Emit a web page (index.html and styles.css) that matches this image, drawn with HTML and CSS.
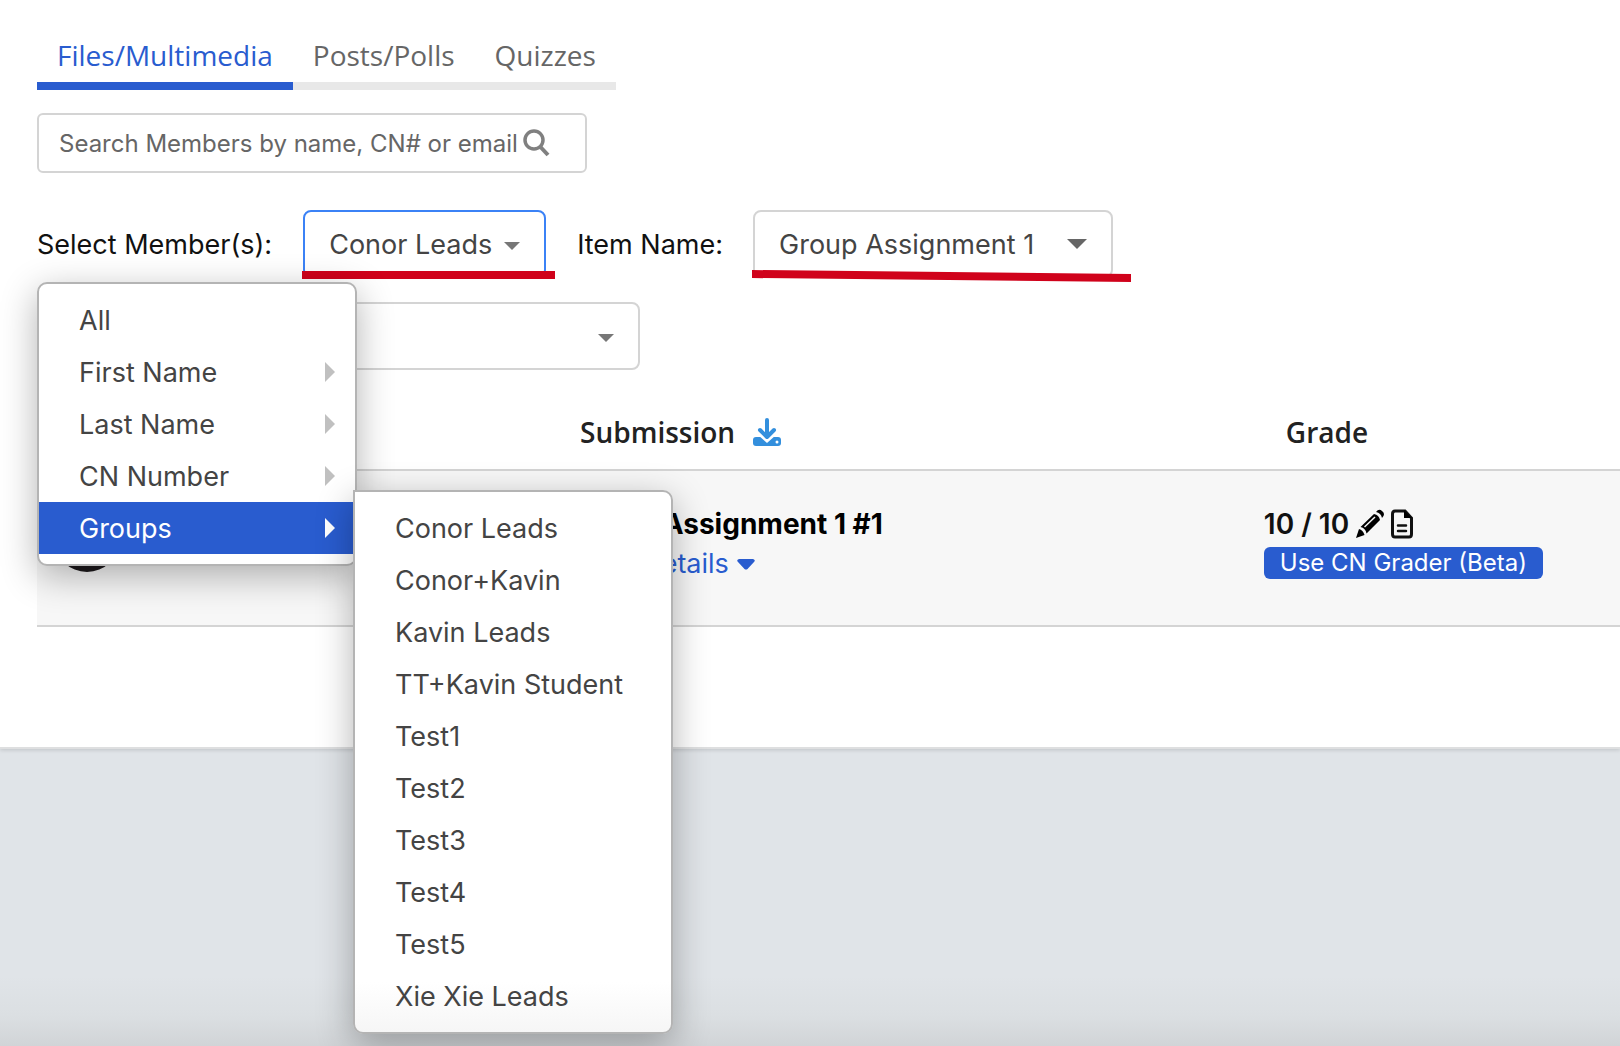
FILE: index.html
```html
<!DOCTYPE html>
<html lang="en">
<head>
    <meta charset="UTF-8">
    <meta name="viewport" content="width=device-width, initial-scale=1.0">
    <title>Submissions</title>
    <link rel="stylesheet" href="styles.css">
</head>
<body>
    <main class="panel">
        <nav class="tabs">
            <a href="#files" class="tab active">Files/Multimedia</a>
            <a href="#posts" class="tab">Posts/Polls</a>
            <a href="#quizzes" class="tab">Quizzes</a>
        </nav>

        <form class="search">
            <input type="text" class="search-input" aria-label="Search Members" placeholder="Search Members by name, CN# or email">
            <button type="button" class="search-button" aria-label="Search">
                <svg width="28" height="30" viewBox="0 0 28 30" fill="none" stroke="#808080">
                    <circle cx="11" cy="12" r="9" stroke-width="3.500"/>
                    <path d="M17.500 19L25 27" stroke-width="4"/>
                </svg>
            </button>
        </form>

        <div class="filters">
            <span class="filter-label" id="member-label">Select Member(s):</span>
            <div class="dropdown member-dropdown">
                <button type="button" class="dropdown-button open" aria-haspopup="true" aria-expanded="true" aria-describedby="member-label">
                    Conor Leads <span class="caret"></span>
                </button>
                <div class="underline"></div>
            </div>
            <label class="filter-label" for="item-name">Item Name:</label>
            <div class="dropdown item-dropdown">
                <select id="item-name" class="select">
                    <option>Group Assignment 1</option>
                </select>
                <span class="caret caret-large"></span>
                <svg class="underline-slanted" width="380" height="12" viewBox="0 0 380 12">
                    <path d="M0 0L379 4V12L0 8Z" fill="#d0021b"/>
                </svg>
            </div>

            <ul class="menu">
                <li><button type="button" class="menu-item">All</button></li>
                <li><button type="button" class="menu-item has-sub">First Name</button></li>
                <li><button type="button" class="menu-item has-sub">Last Name</button></li>
                <li><button type="button" class="menu-item has-sub">CN Number</button></li>
                <li class="menu-parent">
                    <button type="button" class="menu-item has-sub selected">Groups</button>
                    <ul class="menu submenu">
                        <li><button type="button" class="menu-item">Conor Leads</button></li>
                        <li><button type="button" class="menu-item">Conor+Kavin</button></li>
                        <li><button type="button" class="menu-item">Kavin Leads</button></li>
                        <li><button type="button" class="menu-item">TT+Kavin Student</button></li>
                        <li><button type="button" class="menu-item">Test1</button></li>
                        <li><button type="button" class="menu-item">Test2</button></li>
                        <li><button type="button" class="menu-item">Test3</button></li>
                        <li><button type="button" class="menu-item">Test4</button></li>
                        <li><button type="button" class="menu-item">Test5</button></li>
                        <li><button type="button" class="menu-item">Xie Xie Leads</button></li>
                    </ul>
                </li>
            </ul>
        </div>

        <div class="dropdown status-dropdown">
            <select class="select" aria-label="Filter">
                <option></option>
            </select>
            <span class="caret"></span>
        </div>

        <table class="submissions">
            <thead>
                <tr>
                    <th class="col-member"></th>
                    <th class="col-submission">
                        <div class="heading">
                            Submission
                            <svg width="30" height="30" viewBox="0 0 30 30">
                                <rect x="1" y="20" width="28" height="9" rx="3" fill="#338fdd"/>
                                <path d="M6 14L15 22L24 14" fill="none" stroke="#fff" stroke-width="6"/>
                                <path d="M15 3V19M8 13L15 20L22 13" fill="none" stroke="#338fdd" stroke-width="4" stroke-linecap="round" stroke-linejoin="round"/>
                                <circle cx="25" cy="25" r="1.500" fill="#fff"/>
                            </svg>
                        </div>
                    </th>
                    <th class="col-grade">Grade</th>
                </tr>
            </thead>
            <tbody>
                <tr>
                    <td><div class="avatar"></div></td>
                    <td>
                        <div class="submission-title">Group Assignment 1 #1</div>
                        <a href="#details" class="details">View Details
                            <svg width="18" height="11" viewBox="0 0 18 11"><path d="M2 0H16Q19 1 17 3L10.500 10Q9 11 7.500 10L1 3Q-1 1 2 0Z" fill="#295ccf"/></svg>
                        </a>
                    </td>
                    <td>
                        <div class="score">
                            10 / 10
                            <button type="button" class="icon-button" aria-label="Edit grade">
                                <svg width="28" height="30" viewBox="0 0 28 30">
                                    <path d="M0 29L3 20Q7 21 8.500 26Z"/>
                                    <path d="M4.500 18L18 5Q23 6 24 11L10.500 24.500Q9.500 19 4.500 18Z"/>
                                    <path d="M20 3Q23 -1 26 2Q30 5 26 9Q25 4 20 3Z"/>
                                    <path d="M8.500 18L19 8" stroke="#f7f7f7" stroke-width="1.500"/>
                                </svg>
                            </button>
                            <button type="button" class="icon-button" aria-label="View document">
                                <svg width="22" height="30" viewBox="0 0 22 30">
                                    <path d="M4 2H14L20.500 9V25Q20.500 28 18 28H4Q1.500 28 1.500 25V5Q1.500 2 4 2Z" fill="none" stroke="#111" stroke-width="3"/>
                                    <path d="M13 1L21 9H13Z"/>
                                    <path d="M7 16.500H15M7 22H15" stroke="#111" stroke-width="2.500" stroke-linecap="round"/>
                                </svg>
                            </button>
                        </div>
                        <button type="button" class="grader-button">Use CN Grader (Beta)</button>
                    </td>
                </tr>
            </tbody>
        </table>
    </main>
</body>
</html>
```

FILE: styles.css
```css
* {
    box-sizing: border-box;
}

body {
    margin: 0;
    min-height: 100vh;
    font-family: Inter, "Liberation Sans", sans-serif;
    font-size: 27px;
    color: #444;
    background: linear-gradient(to top, #d1d4d7, #dbdfe2 30px, #e0e4e8 70px);
}

button,
input,
select {
    font: inherit;
    color: inherit;
}

button {
    padding: 0;
    border: none;
    background: none;
    cursor: pointer;
}

.panel {
    padding: 30px 0 120px 37px;
    background: #fff;
    border-bottom: 2px solid #dedfe0;
    box-shadow: 0 1px 4px rgba(0, 0, 0, 0.15);
}

.tabs {
    display: flex;
    width: fit-content;
    font-family: "Open Sans", sans-serif;
    font-size: 28px;
    line-height: 50px;
}

.tab {
    padding: 0 20px 2px;
    color: #666;
    text-decoration: none;
    border-bottom: 8px solid #e8e8e8;
}

.tab.active {
    color: #295ccf;
    border-color: #295ccf;
}

.search {
    display: flex;
    align-items: center;
    width: 550px;
    height: 60px;
    margin-top: 23px;
    padding-left: 20px;
    border: 2px solid #d4d4d4;
    border-radius: 6px;
}

.search-input {
    width: 464px;
    padding: 0;
    border: none;
    outline: none;
    font-size: 24px;
}

.search-input::placeholder {
    color: #666;
}

.search-button svg {
    display: block;
}

.filters {
    position: relative;
    display: flex;
    align-items: center;
    margin-top: 37px;
}

.filter-label {
    color: #111;
}

.dropdown {
    position: relative;
    display: flex;
    align-items: center;
    height: 68px;
}

.dropdown-button,
.select {
    width: 100%;
    height: 100%;
    padding: 0 24px;
    background: #fff;
    border: 2px solid #d4d4d4;
    border-radius: 8px;
    appearance: none;
    text-align: left;
}

.dropdown-button.open {
    display: flex;
    align-items: center;
    justify-content: space-between;
    border-color: #3b82f6;
}

.caret {
    margin-top: 4px;
    border: 8px solid transparent;
    border-top-color: #777;
    border-bottom: none;
}

.caret-large {
    margin-top: 0;
    border-width: 10px;
    border-bottom: none;
    border-top-color: #666;
}

.select + .caret {
    position: absolute;
    right: 26px;
}

.member-dropdown {
    width: 243px;
    margin: 0 31px;
}

.item-dropdown {
    width: 360px;
    margin-left: 30px;
}

.status-dropdown {
    width: 603px;
    margin-top: 24px;
}

.underline {
    position: absolute;
    top: 61px;
    left: -1px;
    width: 253px;
    height: 8px;
    background: #d0021b;
}

.underline-slanted {
    position: absolute;
    top: 60px;
    left: -1px;
}

.menu {
    position: absolute;
    top: 72px;
    left: 0;
    z-index: 1;
    width: 320px;
    margin: 0;
    padding: 10px 0;
    list-style: none;
    background: #fff;
    border: 2px solid #b4b4b4;
    border-radius: 10px;
    box-shadow: 0 10px 36px rgba(0, 0, 0, 0.3);
}

.menu-parent {
    position: relative;
}

.submenu {
    top: -12px;
    left: 314px;
    background: linear-gradient(to top, #f6f6f6, #fff 50px);
    border-top-left-radius: 0;
}

.menu-item {
    display: flex;
    align-items: center;
    justify-content: space-between;
    width: 100%;
    height: 52px;
    padding: 0 20px 0 40px;
}

.has-sub::after {
    content: "";
    border: 10px solid transparent;
    border-left-color: #c0c0c0;
    border-right: none;
}

.menu-item.selected {
    color: #fff;
    background: #295ccf;
}

.selected::after {
    border-left-color: #fff;
}

.submissions {
    width: 100%;
    margin-top: 24px;
    table-layout: fixed;
    border-collapse: collapse;
}

.submissions th {
    height: 76px;
    padding: 0;
    border-bottom: 2px solid #d4d4d4;
    font-family: "Open Sans", sans-serif;
    font-size: 28px;
    font-weight: 600;
    color: #222;
    text-align: left;
}

.submissions td {
    height: 156px;
    padding: 37px 0 0;
    vertical-align: top;
    background: #f7f7f7;
    border-bottom: 2px solid #d4d4d4;
}

.submissions .col-member {
    width: 33.8%;
}

.submissions .col-submission {
    width: 43.7%;
    padding-left: 8px;
}

.submissions .col-grade {
    padding-left: 22px;
}

.heading {
    display: flex;
    align-items: center;
    gap: 17px;
}

.avatar {
    width: 64px;
    height: 64px;
    margin-left: 18px;
    border-radius: 50%;
    background: #1e1a1d;
}

.submission-title {
    font-size: 28px;
    line-height: 32px;
    font-weight: 700;
    color: #000;
}

.details {
    display: flex;
    align-items: center;
    gap: 8px;
    margin-top: 8px;
    line-height: 32px;
    color: #295ccf;
    text-decoration: none;
}

.score {
    display: flex;
    align-items: center;
    gap: 7px;
    height: 32px;
    font-size: 28px;
    font-weight: 600;
    color: #111;
}

.icon-button svg {
    display: block;
}

.grader-button {
    display: block;
    height: 32px;
    margin-top: 7px;
    padding: 0 16px;
    font-size: 24px;
    line-height: 32px;
    color: #fff;
    background: #295ccf;
    border-radius: 6px;
}
```
